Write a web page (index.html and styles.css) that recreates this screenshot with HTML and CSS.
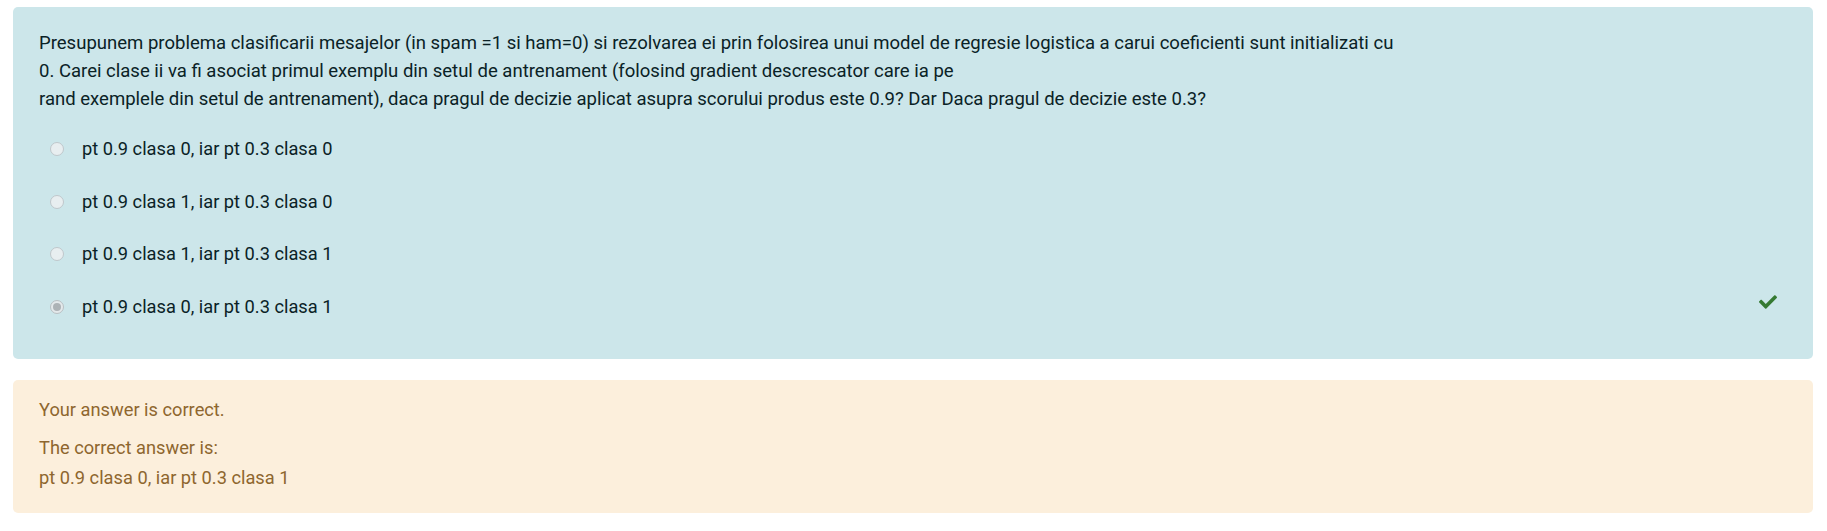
FILE: index.html
```html
<!DOCTYPE html>
<html lang="ro">
<head>
<meta charset="utf-8">
<title>Intrebare</title>
<link rel="stylesheet" href="styles.css">
</head>
<body>
<div class="que">
  <div class="formulation">
    <div class="qtext">Presupunem problema clasificarii mesajelor (in spam =1 si ham=0) si rezolvarea ei prin folosirea unui model de regresie logistica a carui coeficienti sunt initializati cu<br>0. Carei clase ii va fi asociat primul exemplu din setul de antrenament (folosind gradient descrescator care ia pe<br>rand exemplele din setul de antrenament), daca pragul de decizie aplicat asupra scorului produs este 0.9? Dar Daca pragul de decizie este 0.3?</div>
    <div class="answer">
      <div class="opt"><span class="radio"></span><span class="label">pt 0.9 clasa 0, iar pt 0.3 clasa 0</span></div>
      <div class="opt"><span class="radio"></span><span class="label">pt 0.9 clasa 1, iar pt 0.3 clasa 0</span></div>
      <div class="opt"><span class="radio"></span><span class="label">pt 0.9 clasa 1, iar pt 0.3 clasa 1</span></div>
      <div class="opt"><span class="radio checked"></span><span class="label">pt 0.9 clasa 0, iar pt 0.3 clasa 1</span>
        <svg class="check" viewBox="0 60 512 392" width="18" height="14" aria-hidden="true"><path d="M173.898 439.404l-166.4-166.4c-9.997-9.997-9.997-26.206 0-36.204l36.203-36.204c9.997-9.998 26.207-9.998 36.204 0L192 312.690 432.095 72.596c9.997-9.997 26.207-9.997 36.204 0l36.203 36.204c9.997 9.997 9.997 26.206 0 36.204l-294.4 294.401c-9.998 9.997-26.207 9.997-36.204-.001z"/></svg>
      </div>
    </div>
  </div>
  <div class="outcome">
    <p class="fb">Your answer is correct.</p>
    <div class="right">The correct answer is:</div>
    <div class="right">pt 0.9 clasa 0, iar pt 0.3 clasa 1</div>
  </div>
</div>
</body>
</html>
```

FILE: styles.css
```css
html, body {
  margin: 0;
  padding: 0;
  background: #ffffff;
}
body {
  font-family: Roboto, "Liberation Sans", sans-serif;
  font-size: 18.25px;
  line-height: 28.125px;
}
.que {
  padding: 7px 14px 0 13px;
}
.formulation {
  background: #cce6ea;
  color: #0a2226;
  border-radius: 5px;
  padding: 22px 26px 26px 26px;
}
.qtext {
  white-space: nowrap;
  font-size: 18.55px;
}
.answer {
  margin-top: 9.6px;
}
.opt {
  display: flex;
  align-items: center;
  height: 52.5px;
  padding-left: 11px;
}
.radio {
  box-sizing: border-box;
  width: 14px;
  height: 14px;
  border-radius: 50%;
  border: 1px solid #bfc7cb;
  background: #e8eef0;
  flex: none;
  display: flex;
  align-items: center;
  justify-content: center;
}
.radio.checked {
  border-color: #b9c0c3;
  background: #e4e9eb;
}
.radio.checked::after {
  content: "";
  width: 8px;
  height: 8px;
  border-radius: 50%;
  background: #adb3b6;
}
.label {
  margin-left: 18px;
}
.check {
  margin-left: auto;
  margin-right: 10px;
  margin-top: -9px;
  fill: #357a32;
  flex: none;
}
.outcome {
  margin-top: 21px;
  background: #fcefdc;
  color: #8e662e;
  border-radius: 5px;
  padding: 16px 26px 20px 26px;
}
.fb {
  margin: 0 0 9px 0;
}
.right {
  line-height: 30px;
}
```
